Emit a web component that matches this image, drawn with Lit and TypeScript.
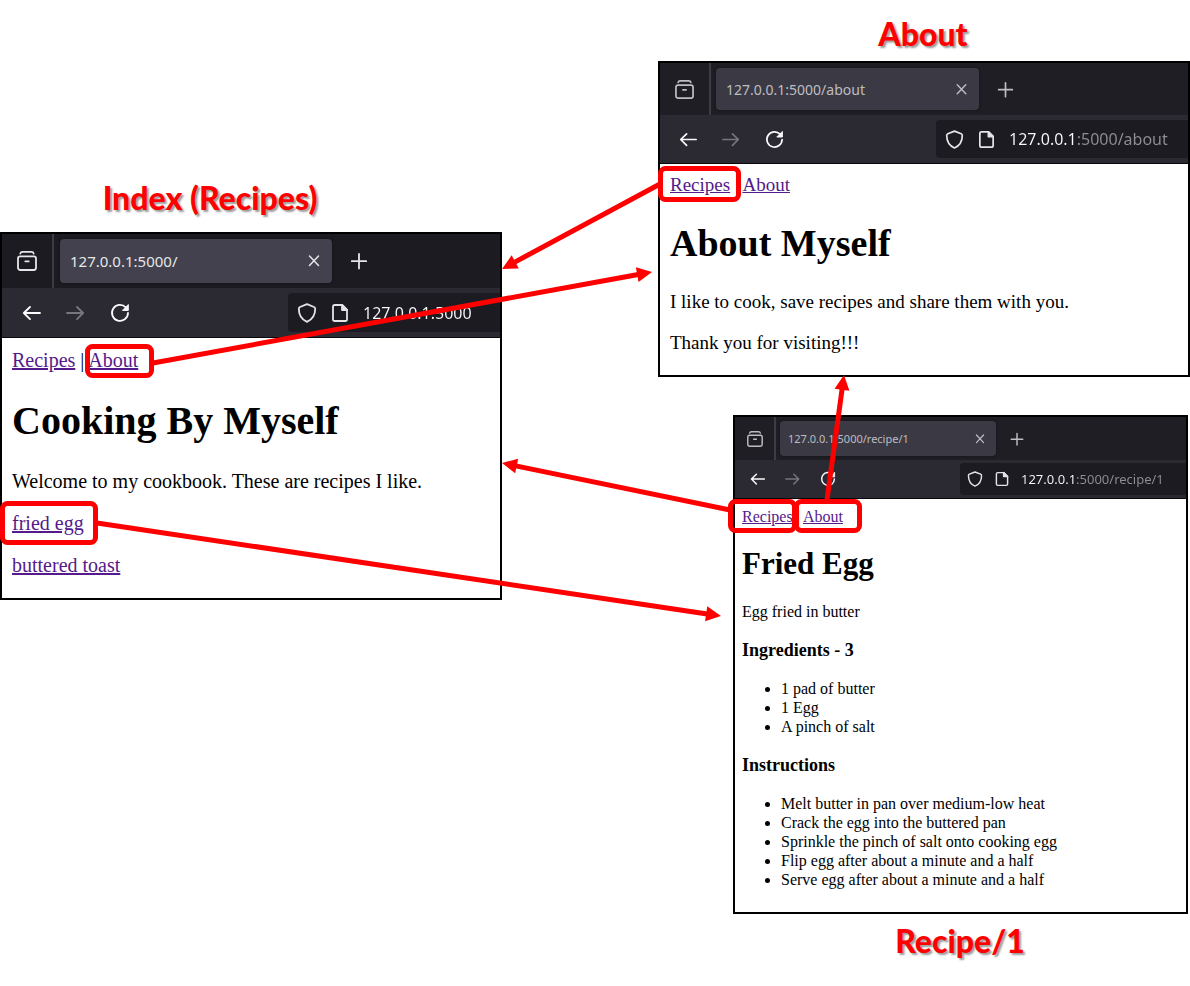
import { LitElement, html, svg, css } from "lit";
import { customElement, property } from "lit/decorators.js";

/** A dark browser window: tab strip, toolbar, and the page in its slot. */
@customElement("browser-window")
class BrowserWindow extends LitElement {
  @property() tab = "";
  @property() address = "";

  static styles = css`
    :host {
      display: block;
      box-sizing: border-box;
      border: 2px solid #000;
      background: #fff;
      font-family: "Noto Sans", "Open Sans", sans-serif;
    }
    button {
      display: flex;
      align-items: center;
      justify-content: center;
      padding: 0;
      border: 0;
      background: none;
      color: inherit;
      font: inherit;
    }
    svg {
      display: block;
      fill: none;
      stroke: currentColor;
      stroke-width: 1.8;
      stroke-linecap: round;
      stroke-linejoin: round;
    }
    .icon {
      width: var(--icon);
      height: var(--icon);
      flex: none;
    }
    .tabs {
      display: flex;
      align-items: center;
      height: var(--tabs-height);
      background: var(--strip);
      color: var(--tab-text);
    }
    .recent {
      box-sizing: border-box;
      align-self: stretch;
      width: var(--recent-width);
      border-right: 2px solid #3d3c44;
    }
    .tab {
      display: flex;
      align-items: center;
      box-sizing: border-box;
      width: var(--tab-width);
      height: var(--tab-height);
      margin-left: var(--tab-gap);
      padding: 0 8px 0 var(--tab-pad);
      border-radius: 4px;
      background: var(--tab-fill);
      box-shadow: 0 0 3px #0006;
      font-size: var(--tab-font);
    }
    .title {
      flex: 1;
      white-space: nowrap;
    }
    .add {
      width: var(--add-width);
      align-self: stretch;
    }
    .bar {
      display: flex;
      align-items: center;
      height: var(--bar-height);
      padding-left: var(--bar-pad);
      border-bottom: 1px solid #08080a;
      background: #2b2a33;
      color: #fbfbfe;
    }
    .nav {
      width: var(--nav-width);
      align-self: stretch;
    }
    .nav:disabled {
      color: #77767d;
    }
    .field {
      display: flex;
      align-items: center;
      box-sizing: border-box;
      width: var(--field-width);
      height: var(--field-height);
      margin-left: auto;
      padding-left: var(--field-pad);
      gap: var(--field-gap);
      border-radius: 4px 0 0 4px;
      background: #1c1b22;
      color: #e4e4e8;
    }
    input {
      flex: 1;
      min-width: 0;
      padding: 0;
      border: 0;
      outline: 0;
      color: #fbfbfe;
      font-family: inherit;
      font-size: var(--url-font);
      background: linear-gradient(90deg, #fbfbfe var(--host-width), #8f8e95 var(--host-width));
      background-clip: text;
      -webkit-background-clip: text;
      -webkit-text-fill-color: transparent;
    }
  `;

  render() {
    return html`
      <div class="tabs">
        <button class="recent" aria-label="Recent browsing">
          <svg class="icon" viewBox="0 0 20 20">
            <path d="M3.300 2.600Q3.700.9 5.500.9h9Q16.300.9 16.700 2.600" />
            <rect x="1" y="5.300" width="18" height="13.700" rx="2.200" />
            <path d="M8.300 10.300h3.400" />
          </svg>
        </button>
        <div class="tab">
          <span class="title">${this.tab}</span>
          <button aria-label="Close tab">
            <svg class="icon" viewBox="0 0 20 20"><path d="M5.500 5l9 9.500M14.500 5l-9 9.500" stroke-width="1.500" /></svg>
          </button>
        </div>
        <button class="add" aria-label="New tab">
          <svg class="icon" viewBox="0 0 20 20"><path d="M10 3v14.500M2.800 10.200h14.400" stroke-width="1.800" /></svg>
        </button>
      </div>
      <div class="bar">
        <button class="nav" aria-label="Back">
          <svg class="icon" viewBox="0 0 20 20"><path d="M18 10H2M8 4L1.800 10 8 16.200" /></svg>
        </button>
        <button class="nav" aria-label="Forward" disabled>
          <svg class="icon" viewBox="0 0 20 20"><path d="M1 10h16M11 4l6.200 6-6.200 6.200" /></svg>
        </button>
        <button class="nav" aria-label="Reload">
          <svg class="icon" viewBox="0 0 20 20">
            <path d="M15.800 4.400A8 8 0 1 0 18 10" />
            <path d="M18.300 1.900v5.500h-5.500z" fill="currentColor" stroke-width="1" />
          </svg>
        </button>
        <div class="field">
          <svg class="icon" viewBox="0 0 20 20">
            <path d="M10 1.200L17 4Q18.200 4.500 18.200 5.800C18.200 12 15.500 16.500 10 18.900 4.500 16.500 1.800 12 1.800 5.800Q1.800 4.500 3 4z" />
          </svg>
          <svg class="icon" viewBox="0 0 20 20">
            <path d="M4.800 2h7.400L17 6.800v9.400Q17 18 15.200 18H4.800Q3 18 3 16.200V3.800Q3 2 4.800 2z" />
            <path d="M12 2v5h5z" fill="currentColor" />
          </svg>
          <input type="text" aria-label="Address" .value=${this.address} />
        </div>
      </div>
      <slot></slot>
    `;
  }
}

interface Arrow {
  from: [number, number];
  to: [number, number];
}

const ARROWS: Arrow[] = [
  { from: [660, 184], to: [502, 269] },
  { from: [153, 363], to: [652, 272] },
  { from: [97, 523], to: [721, 616] },
  { from: [730, 510], to: [502, 463] },
  { from: [827, 500], to: [844, 375] },
];

/** Outer boxes of the red outlines: x, y, width, height. */
const OUTLINES: [number, number, number, number][] = [
  [85, 344, 69, 34],
  [658, 166, 83, 36],
  [0, 501, 98, 44],
  [728, 499, 69, 34],
  [794, 499, 68, 34],
];

const HEAD = 15;

@customElement("app-root")
class AppRoot extends LitElement {
  static styles = css`
    :host {
      display: block;
      background: #fff;
    }
    .canvas {
      position: relative;
      min-height: 986px;
      overflow: hidden;
    }
    .label {
      position: absolute;
      margin: 0;
      color: #f00;
      font: 900 32px/40px Lato, sans-serif;
      text-align: center;
      text-shadow: 2px 2px 2px #0006;
      white-space: nowrap;
    }
    .label-index { left: 60px; top: 178px; width: 300px; }
    .label-about { left: 823px; top: 14px; width: 200px; }
    .label-recipe { left: 860px; top: 921px; width: 200px; }

    browser-window {
      position: absolute;
    }
    .index {
      left: 0;
      top: 232px;
      width: 502px;
      --strip: #1c1b22;
      --tab-fill: #42414d;
      --tab-text: #e6e6ea;
      --icon: 20px;
      --tabs-height: 54px;
      --recent-width: 52px;
      --tab-gap: 6px;
      --tab-width: 272px;
      --tab-height: 44px;
      --tab-pad: 10px;
      --tab-font: 15px;
      --add-width: 54px;
      --bar-height: 49px;
      --bar-pad: 8px;
      --nav-width: 44px;
      --field-width: 212px;
      --field-height: 39px;
      --field-pad: 9px;
      --field-gap: 13px;
      --url-font: 16px;
      --host-width: 100%;
    }
    .about {
      left: 658px;
      top: 61px;
      width: 532px;
      --strip: #1f1e25;
      --tab-fill: #3b3a44;
      --tab-text: #bdbdc2;
      --icon: 19px;
      --tabs-height: 52px;
      --recent-width: 51px;
      --tab-gap: 5px;
      --tab-width: 263px;
      --tab-height: 42px;
      --tab-pad: 10px;
      --tab-font: 14px;
      --add-width: 52px;
      --bar-height: 48px;
      --bar-pad: 7px;
      --nav-width: 43px;
      --field-width: 252px;
      --field-height: 38px;
      --field-pad: 9px;
      --field-gap: 13px;
      --url-font: 16px;
      --host-width: 68px;
    }
    .recipe {
      left: 733px;
      top: 415px;
      width: 455px;
      --strip: #1f1e25;
      --tab-fill: #3b3a44;
      --tab-text: #bdbdc2;
      --icon: 16px;
      --tabs-height: 43px;
      --recent-width: 41px;
      --tab-gap: 4px;
      --tab-width: 216px;
      --tab-height: 35px;
      --tab-pad: 8px;
      --tab-font: 11px;
      --add-width: 42px;
      --bar-height: 38px;
      --bar-pad: 5px;
      --nav-width: 35px;
      --field-width: 226px;
      --field-height: 32px;
      --field-pad: 7px;
      --field-gap: 11px;
      --url-font: 13px;
      --host-width: 55px;
    }

    .page {
      color: #000;
      font-family: "Liberation Serif", serif;
    }
    .page a { color: #551a8b; }
    .page p, .page h1, .page h2, .page ul { margin: 0; }

    .index .page { padding: 11px 10px 22px; font-size: 20px; line-height: 22px; }
    .index h1 { margin: 27px 0 26px; font-size: 40px; line-height: 46px; }
    .index p + p { margin-top: 20px; }

    .about .page { padding: 10px 10px 22px; font-size: 19px; line-height: 21px; }
    .about h1 { margin: 26px 0 26px; font-size: 38px; line-height: 44px; }
    .about p + p { margin-top: 20px; }

    .recipe .page { padding: 8px 7px 23px; font-size: 16px; line-height: 19px; }
    .recipe h1 { margin: 20px 0; font-size: 31px; line-height: 36px; }
    .recipe h2 { margin: 19px 0; font-size: 18px; line-height: 20px; }
    .recipe ul { padding-left: 39px; }

    .marks {
      position: absolute;
      left: 0;
      top: 0;
      width: 1190px;
      height: 986px;
      pointer-events: none;
    }
    .marks line { stroke: #f00; stroke-width: 5; }
    .marks rect { fill: none; stroke: #f00; stroke-width: 5; }
    .marks polygon { fill: #f00; }
  `;

  private arrow({ from: [x1, y1], to: [x2, y2] }: Arrow) {
    const length = Math.hypot(x2 - x1, y2 - y1);
    const ux = (x2 - x1) / length;
    const uy = (y2 - y1) / length;
    const bx = x2 - ux * HEAD;
    const by = y2 - uy * HEAD;
    const half = HEAD / 2;
    const points = `${x2},${y2} ${bx - uy * half},${by + ux * half} ${bx + uy * half},${by - ux * half}`;
    return svg`
      <line x1=${x1} y1=${y1} x2=${bx + ux} y2=${by + uy} />
      <polygon points=${points} />
    `;
  }

  private list(items: string[]) {
    return html`<ul>${items.map((item) => html`<li>${item}</li>`)}</ul>`;
  }

  private links() {
    return html`<nav><a href="#recipes">Recipes</a> | <a href="#about">About</a></nav>`;
  }

  render() {
    return html`
      <main class="canvas">
        <h2 class="label label-index">Index (Recipes)</h2>
        <browser-window class="index" tab="127.0.0.1:5000/" address="127.0.0.1:5000">
          <div class="page">
            ${this.links()}
            <h1>Cooking By Myself</h1>
            <p>Welcome to my cookbook. These are recipes I like.</p>
            <p><a href="#fried-egg">fried egg</a></p>
            <p><a href="#buttered-toast">buttered toast</a></p>
          </div>
        </browser-window>

        <h2 class="label label-about">About</h2>
        <browser-window class="about" tab="127.0.0.1:5000/about" address="127.0.0.1:5000/about">
          <div class="page">
            ${this.links()}
            <h1>About Myself</h1>
            <p>I like to cook, save recipes and share them with you.</p>
            <p>Thank you for visiting!!!</p>
          </div>
        </browser-window>

        <browser-window class="recipe" tab="127.0.0.1:5000/recipe/1" address="127.0.0.1:5000/recipe/1">
          <div class="page">
            ${this.links()}
            <h1>Fried Egg</h1>
            <p>Egg fried in butter</p>
            <h2>Ingredients - 3</h2>
            ${this.list(["1 pad of butter", "1 Egg", "A pinch of salt"])}
            <h2>Instructions</h2>
            ${this.list([
              "Melt butter in pan over medium-low heat",
              "Crack the egg into the buttered pan",
              "Sprinkle the pinch of salt onto cooking egg",
              "Flip egg after about a minute and a half",
              "Serve egg after about a minute and a half",
            ])}
          </div>
        </browser-window>
        <h2 class="label label-recipe">Recipe/1</h2>

        <svg class="marks" viewBox="0 0 1190 986" aria-hidden="true">
          ${ARROWS.map((a) => this.arrow(a))}
          ${OUTLINES.map(
            ([x, y, w, h]) => svg`<rect x=${x + 2.5} y=${y + 2.5} width=${w - 5} height=${h - 5} rx="5" />`,
          )}
        </svg>
      </main>
    `;
  }
}
